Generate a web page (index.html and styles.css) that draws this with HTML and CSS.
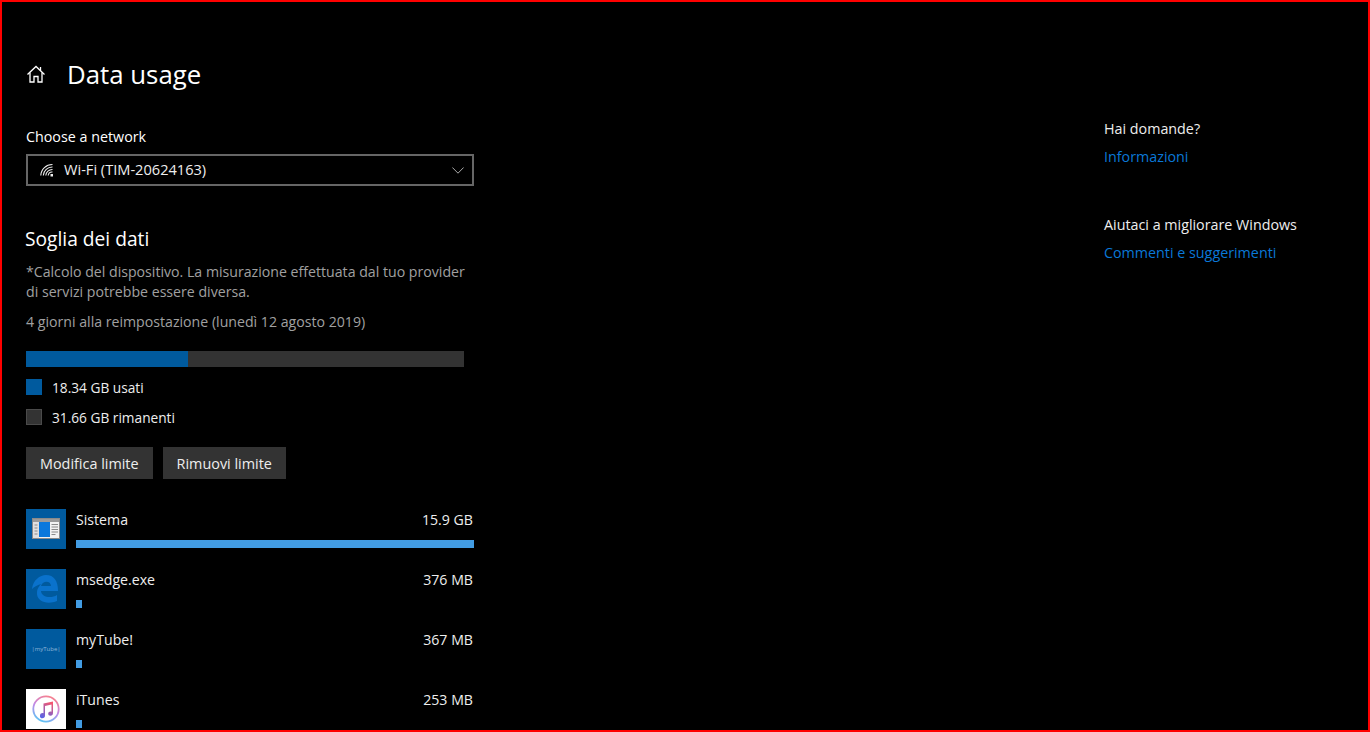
FILE: index.html
```html
<!DOCTYPE html>
<html lang="it">
<head>
  <meta charset="UTF-8">
  <meta name="viewport" content="width=device-width, initial-scale=1.0">
  <title>Data usage</title>
  <link rel="stylesheet" href="styles.css">
</head>
<body>
  <div class="window">
    <div class="main">
      <header class="page-title">
        <svg class="home-icon" width="20" height="20" viewBox="0 0 20 20" fill="none" stroke="#fff" stroke-width="1.3">
          <path d="M1.5 10.5 10 2.500l8.500 8"/>
          <path d="M4 8.500V18h4v-5.500h4V18h4V8.500"/>
          <path d="M14.500 6.500V3"/>
        </svg>
        <h1>Data usage</h1>
      </header>

      <label class="field-label">Choose a network</label>
      <div class="select">
        <svg class="wifi-icon" width="14" height="14" viewBox="0 0 14 14" fill="none" stroke="#eee" stroke-width="1.1">
          <path d="M.8 12.500A11.500 11.500 0 0 1 12.500 1.500"/>
          <path d="M3.300 12.500A9 9 0 0 1 12.500 4"/>
          <path d="M5.800 12.500A6.500 6.500 0 0 1 12.500 6.500"/>
          <path d="M8.200 12.500A4 4 0 0 1 12.500 9"/>
          <rect x="10.500" y="11" width="2.500" height="2.500" fill="#eee" stroke="none"/>
        </svg>
        <span class="select-text">Wi-Fi (TIM-20624163)</span>
        <svg class="chevron" width="12" height="7" viewBox="0 0 12 7" fill="none" stroke="#aaa" stroke-width="1">
          <path d="M.4.500 6 6.200 11.600.500"/>
        </svg>
      </div>

      <h2>Soglia dei dati</h2>
      <p class="note">*Calcolo del dispositivo. La misurazione effettuata dal tuo provider<br>di servizi potrebbe essere diversa.</p>
      <p class="note reset">4 giorni alla reimpostazione (lunedì 12 agosto 2019)</p>

      <div class="quota-bar"><div class="quota-used" style="width: 37%"></div></div>
      <div class="legend"><span class="swatch swatch-used"></span>18.34 GB usati</div>
      <div class="legend"><span class="swatch swatch-left"></span>31.66 GB rimanenti</div>

      <div class="buttons">
        <button>Modifica limite</button>
        <button>Rimuovi limite</button>
      </div>

      <div class="app-list">
        <div class="app-item">
          <div class="app-icon">
            <svg width="40" height="40" viewBox="0 0 40 40">
              <rect x="6.500" y="9.500" width="27" height="20" fill="#f2f2f2" stroke="#8a8a8a"/>
              <rect x="7" y="10" width="26" height="3" fill="#9a9a9a"/>
              <rect x="7" y="13" width="6" height="16" fill="#e0e0e0"/>
              <rect x="13" y="13" width="11" height="15" fill="#0a78dc"/>
              <path d="M8.500 16h3M8.500 19h3M8.500 22h3M8.500 25h3M25.500 15.500h6.500M25.500 18h6.500M25.500 20.500h6.500M25.500 23h6.500M25.500 25.500h4" stroke="#8a8a8a"/>
            </svg>
          </div>
          <div class="app-info">
            <div class="app-row"><span>Sistema</span><span>15.9 GB</span></div>
            <div class="app-bar" style="width: 100%"></div>
          </div>
        </div>
        <div class="app-item">
          <div class="app-icon">
            <svg width="40" height="40" viewBox="0 0 40 40">
              <path d="M6 20C7 11 14 6 20 6c8 0 12 6 12 16H15c0 6 10 8 16 4v6c-9 4-21 1-20-9 0-3 2-6 4-8-4 1-7 3-9 5Zm9-3h10c0-5-8-6-10 0Z" fill="#0a72cc" fill-rule="evenodd"/>
            </svg>
          </div>
          <div class="app-info">
            <div class="app-row"><span>msedge.exe</span><span>376 MB</span></div>
            <div class="app-bar app-bar-small"></div>
          </div>
        </div>
        <div class="app-item">
          <div class="app-icon"><span class="mytube-logo">|myTube|</span></div>
          <div class="app-info">
            <div class="app-row"><span>myTube!</span><span>367 MB</span></div>
            <div class="app-bar app-bar-small"></div>
          </div>
        </div>
        <div class="app-item">
          <div class="app-icon app-icon-white">
            <svg width="40" height="40" viewBox="0 0 40 40" fill="none">
              <defs>
                <linearGradient id="ring" x1="0.7" y1="0" x2="0.3" y2="1">
                  <stop offset="0" stop-color="#f9808c"/>
                  <stop offset="0.5" stop-color="#c08ae8"/>
                  <stop offset="1" stop-color="#5cc4f4"/>
                </linearGradient>
                <linearGradient id="note" x1="0.7" y1="0" x2="0.3" y2="1">
                  <stop offset="0" stop-color="#f6566e"/>
                  <stop offset="1" stop-color="#5a63e6"/>
                </linearGradient>
              </defs>
              <circle cx="20" cy="20" r="12.700" fill="#fff" stroke="url(#ring)" stroke-width="1.800"/>
              <path d="M14 26.500c0-2 2-2.800 3.500-2.300V14.500l9.500-2v11.500c0 1.800-1 2.800-2.500 2.800-1.400 0-2.300-.8-2.300-2 0-1.800 1.800-2.600 3.300-2.100v-7.200l-6.500 1.400v9.600c0 1.800-1 2.800-2.700 2.800-1.400 0-2.300-.8-2.300-1.800Z" fill="url(#note)"/>
            </svg>
          </div>
          <div class="app-info">
            <div class="app-row"><span>iTunes</span><span>253 MB</span></div>
            <div class="app-bar app-bar-small"></div>
          </div>
        </div>
      </div>
    </div>

    <aside class="side">
      <div class="side-block">
        <div class="side-title">Hai domande?</div>
        <a class="side-link" href="#">Informazioni</a>
      </div>
      <div class="side-block">
        <div class="side-title">Aiutaci a migliorare Windows</div>
        <a class="side-link" href="#">Commenti e suggerimenti</a>
      </div>
    </aside>
  </div>
</body>
</html>
```

FILE: styles.css
```css
html, body {
  height: 100%;
}
body {
  margin: 0;
  background-color: #000;
  color: #fff;
  font-family: "Open Sans", "Noto Sans", Arial, sans-serif;
  font-size: 14.3px;
  overflow: hidden;
}
.window {
  box-sizing: border-box;
  height: 732px;
  border: 2px solid #f00;
  padding: 0 24px;
  display: flex;
  justify-content: space-between;
  overflow: hidden;
}
.main {
  width: 448px;
  flex-shrink: 0;
}
.page-title {
  display: flex;
  align-items: center;
  height: 40px;
  margin-top: 52px;
}
.home-icon {
  margin-right: 21px;
}
h1 {
  font-size: 25.800px;
  font-weight: 400;
  margin: 0;
}
.field-label {
  display: block;
  margin-top: 33px;
  line-height: 20px;
}
.select {
  box-sizing: border-box;
  display: flex;
  align-items: center;
  height: 32px;
  margin-top: 7px;
  padding: 0 8px 0 12px;
  border: 2px solid #666;
}
.wifi-icon {
  margin-right: 10px;
}
.select-text {
  flex: 1;
  color: #eee;
  font-size: 14.600px;
  padding-bottom: 2px;
}
h2 {
  font-size: 19.200px;
  font-weight: 400;
  line-height: 26px;
  margin: 40px 0 0 -1px;
}
.note {
  color: #a0a0a0;
  font-size: 14.150px;
  line-height: 20px;
  margin: 10px 0 0;
}
.reset {
  margin-top: 10px;
}
.quota-bar {
  width: 438px;
  height: 16px;
  margin-top: 19px;
  background-color: #333;
}
.quota-used {
  height: 100%;
  background-color: #005a9e;
}
.legend {
  display: flex;
  align-items: center;
  height: 20px;
  margin-top: 10px;
  color: #eee;
  font-size: 13.700px;
}
.swatch {
  box-sizing: border-box;
  width: 16px;
  height: 16px;
  margin-right: 10px;
}
.swatch-used {
  background-color: #005a9e;
}
.swatch-left {
  background-color: #333;
  border: 1px solid #4a4a4a;
}
.buttons {
  display: flex;
  gap: 10px;
  margin-top: 20px;
}
button {
  height: 32px;
  padding: 0 14px;
  border: none;
  background-color: #333;
  color: #eee;
  font-family: inherit;
  font-size: 14.400px;
}
.app-list {
  margin-top: 30px;
}
.app-item {
  display: flex;
  height: 40px;
  margin-bottom: 20px;
}
.app-icon {
  width: 40px;
  height: 40px;
  margin-right: 10px;
  background-color: #005a9e;
  display: flex;
  align-items: center;
  justify-content: center;
  flex-shrink: 0;
}
.app-icon-white {
  background-color: #fff;
}
.mytube-logo {
  color: #8fb6d8;
  font-size: 6px;
}
.app-info {
  flex: 1;
}
.app-row {
  display: flex;
  justify-content: space-between;
  font-size: 14.150px;
  line-height: 20px;
  margin-top: 1px;
  padding-right: 1px;
  color: #eee;
}
.app-bar {
  height: 8px;
  margin-top: 10px;
  background-color: #429ce3;
}
.app-bar-small {
  width: 6px;
  height: 8px;
}
.side {
  width: 240px;
  flex-shrink: 0;
  padding-top: 117px;
}
.side-block {
  margin-bottom: 48px;
  line-height: 20px;
}
.side-title {
  color: #eee;
}
.side-link {
  display: block;
  margin-top: 8px;
  color: #0a78d7;
  text-decoration: none;
}
```
